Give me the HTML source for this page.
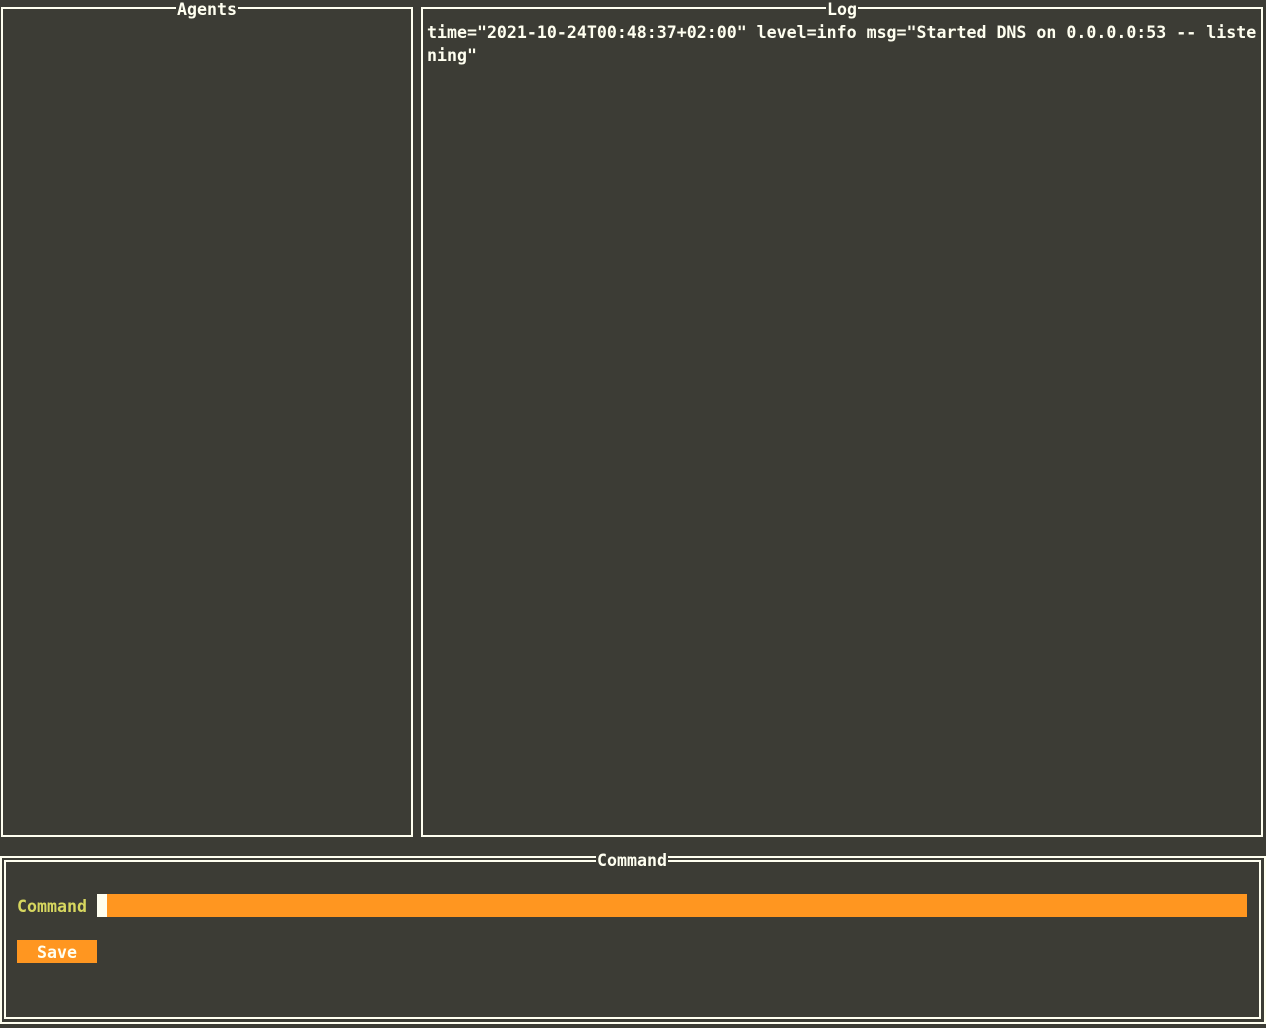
<!DOCTYPE html>
<html><head><meta charset="utf-8"><style>
html,body{margin:0;padding:0;background:#3c3c35;width:1266px;height:1028px;overflow:hidden;position:relative;font-family:"DejaVu Sans Mono","Liberation Mono",monospace;font-size:16.6px;color:#fffff0}
.b{position:absolute;border:2px solid #fffff0;box-sizing:border-box}
.t{position:absolute;background:#3c3c35;font-weight:bold;line-height:18px;padding:0 1px}
</style></head><body>
<div class="b" style="left:1px;top:7px;width:412px;height:830px"></div>
<div class="t" style="left:176px;top:1px">Agents</div>
<div class="b" style="left:421px;top:7px;width:842px;height:830px"></div>
<div class="t" style="left:826px;top:1px">Log</div>
<div style="position:absolute;left:427px;top:21px;width:840px;font-weight:bold;line-height:23px;white-space:pre">time="2021-10-24T00:48:37+02:00" level=info msg="Started DNS on 0.0.0.0:53 -- liste
ning"</div>
<div class="b" style="left:0;top:856px;width:1266px;height:168px"></div>
<div class="b" style="left:4px;top:860px;width:1257px;height:159px"></div>
<div class="t" style="left:596px;top:852px">Command</div>
<div style="position:absolute;left:17px;top:896px;line-height:22px;color:#d7d75f;font-weight:bold">Command</div>
<div style="position:absolute;left:97px;top:894px;width:1150px;height:23px;background:#ff9620"></div>
<div style="position:absolute;left:97px;top:894px;width:10px;height:23px;background:#fffff0"></div>
<div style="position:absolute;left:17px;top:940px;width:80px;height:23px;background:#ff9620;color:#fffff0;font-weight:bold;text-align:center;line-height:25px">Save</div>
</body></html>
